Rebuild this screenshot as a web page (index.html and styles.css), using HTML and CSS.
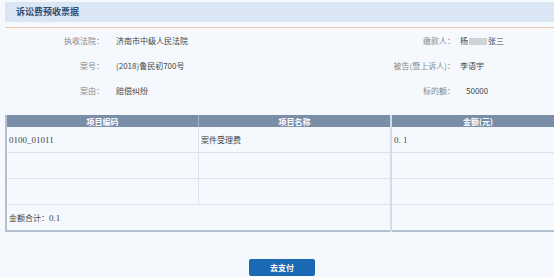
FILE: index.html
```html
<!DOCTYPE html>
<html lang="zh-CN">
<head>
    <meta charset="UTF-8">
    <title>诉讼费预收票据</title>
    <link rel="stylesheet" href="styles.css">
</head>
<body>
    <div class="title-bar">诉讼费预收票据</div>
    <div class="info">
        <div class="row">
            <span class="lbl">执收法院：</span><span class="val">济南市中级人民法院</span>
            <span class="lbl">缴款人：</span><span class="val val-r">杨<i class="blur"></i>张三</span>
        </div>
        <div class="row">
            <span class="lbl">案号：</span><span class="val">(2018)鲁民初700号</span>
            <span class="lbl">被告(暨上诉人)：</span><span class="val val-r">李语宇</span>
        </div>
        <div class="row">
            <span class="lbl">案由：</span><span class="val">赔偿纠纷</span>
            <span class="lbl">标的额：</span><span class="val val-r num">50000</span>
        </div>
    </div>

    <table class="fee">
        <tr>
            <th class="c1">项目编码</th>
            <th class="c2">项目名称</th>
            <th class="c3">金额(元)</th>
        </tr>
        <tr>
            <td class="mono">0100_01011</td>
            <td>案件受理费</td>
            <td class="c3 mono">0.&nbsp;1</td>
        </tr>
        <tr><td></td><td></td><td class="c3"></td></tr>
        <tr><td></td><td></td><td class="c3"></td></tr>
        <tr class="total">
            <td colspan="2">金额合计：<span class="mono">0.1</span></td>
            <td class="c3"></td>
        </tr>
    </table>

    <div class="actions">
        <button class="pay">去支付</button>
    </div>
</body>
</html>
```

FILE: styles.css
```css
body{
    margin: 0;
    background-color: #f5f9fd;
    font-family: "Noto Sans CJK SC", "Noto Sans", sans-serif;
    font-size: 8px;
    color: #333;
    overflow: hidden;
}
.title-bar{
    margin: 2px 0 0 5px;
    height: 20px;
    line-height: 20px;
    padding-left: 11px;
    background-color: #dbe6f4;
    color: #2f4d73;
    font-weight: bold;
    font-size: 9px;
    border-bottom: 5px solid #f5f9fd;
}
.info{
    margin-left: 5px;
    border-top: 1px solid #f2c8a8;
}
.row{
    display: grid;
    grid-template-columns: 99px 200px 151px 1fr;
    height: 25px;
    align-items: center;
}
.lbl{
    text-align: right;
    color: #888;
}
.val{
    padding-left: 12px;
    color: #444;
}
.val-r{
    padding-left: 5px;
}
.val.num{
    padding-left: 11px;
}
.blur{
    display: inline-block;
    width: 18px;
    height: 7px;
    background-color: #cfd3d8;
    vertical-align: -1px;
    margin: 0 1px;
}
.fee{
    margin: 12px 0 0 5px;
    width: 560px;
    border-collapse: collapse;
    border-left: 2px solid #b3c0cf;
    border-bottom: 2px solid #b3c0cf;
}
.fee th{
    background-color: #7a8ea8;
    color: #fff;
    font-weight: bold;
    height: 12px;
    padding: 0;
    font-size: 8px;
    border-right: 1px solid #a6b4c6;
}
.fee th.c1{ width: 191px; }
.fee th.c2{ width: 191px; }
.fee td{
    height: 25px;
    padding: 0 2px;
    border-top: 1px solid #dde2ee;
    border-right: 1px solid #dde2ee;
    color: #444;
}
.fee .c3{
    border-left: 2px solid #d6dbe8;
}
.fee tr:nth-child(2) td{
    border-top: none;
}
.mono{
    font-family: "Liberation Serif", serif;
    font-size: 9px;
    color: #444;
}
.actions{
    display: flex;
    justify-content: center;
    padding: 27px 0 0 10px;
}
.pay{
    width: 66px;
    height: 17px;
    border: none;
    border-radius: 2px;
    background-color: #1c69b3;
    color: #fff;
    font-family: "Noto Sans CJK SC", sans-serif;
    font-size: 8px;
    font-weight: bold;
    padding: 0;
}
```
